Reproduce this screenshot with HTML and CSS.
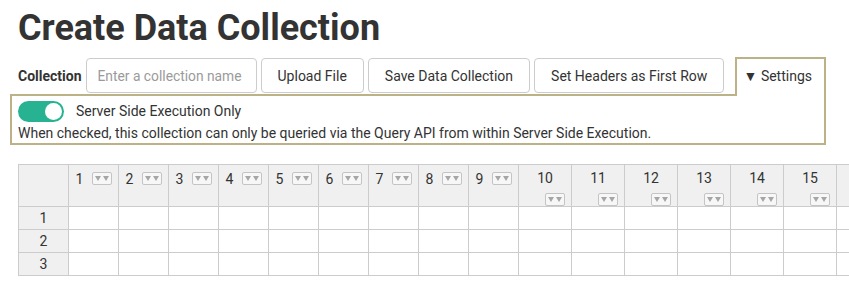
FILE: index.html
```html
<!DOCTYPE html>
<html lang="en">
<head>
    <meta charset="UTF-8">
    <title>Create Data Collection</title>
    <link rel="stylesheet" href="styles.css">
</head>
<body>
    <div class="page">
        <h1 class="title">Create Data Collection</h1>
        <div class="toolbar">
            <label class="field-label">Collection</label>
            <input class="name-input" type="text" placeholder="Enter a collection name">
            <button class="btn">Upload File</button>
            <button class="btn">Save Data Collection</button>
            <button class="btn">Set Headers as First Row</button>
            <div class="settings-tab">&#9660; Settings</div>
        </div>
        <div class="settings-panel">
            <div class="switch-row">
                <span class="switch on"><span class="knob"></span></span>
                <span>Server Side Execution Only</span>
            </div>
            <div class="hint">When checked, this collection can only be queried via the Query API from within Server Side Execution.</div>
        </div>
        <div class="grid-wrap">
            <table class="grid">
                <colgroup>
                    <col class="c-narrow"><col class="c-narrow"><col class="c-narrow"><col class="c-narrow"><col class="c-narrow">
                    <col class="c-narrow"><col class="c-narrow"><col class="c-narrow"><col class="c-narrow"><col class="c-narrow">
                    <col class="c-wide"><col class="c-wide"><col class="c-wide"><col class="c-wide"><col class="c-wide">
                    <col class="c-wide"><col class="c-wide">
                </colgroup>
                <thead>
                    <tr>
                        <th class="corner"></th>
                        <th><div class="head"><span class="num">1</span><span class="type-btn"><i></i><i></i></span></div></th>
                        <th><div class="head"><span class="num">2</span><span class="type-btn"><i></i><i></i></span></div></th>
                        <th><div class="head"><span class="num">3</span><span class="type-btn"><i></i><i></i></span></div></th>
                        <th><div class="head"><span class="num">4</span><span class="type-btn"><i></i><i></i></span></div></th>
                        <th><div class="head"><span class="num">5</span><span class="type-btn"><i></i><i></i></span></div></th>
                        <th><div class="head"><span class="num">6</span><span class="type-btn"><i></i><i></i></span></div></th>
                        <th><div class="head"><span class="num">7</span><span class="type-btn"><i></i><i></i></span></div></th>
                        <th><div class="head"><span class="num">8</span><span class="type-btn"><i></i><i></i></span></div></th>
                        <th><div class="head"><span class="num">9</span><span class="type-btn"><i></i><i></i></span></div></th>
                        <th><div class="head stack"><span class="num">10</span><span class="type-btn"><i></i><i></i></span></div></th>
                        <th><div class="head stack"><span class="num">11</span><span class="type-btn"><i></i><i></i></span></div></th>
                        <th><div class="head stack"><span class="num">12</span><span class="type-btn"><i></i><i></i></span></div></th>
                        <th><div class="head stack"><span class="num">13</span><span class="type-btn"><i></i><i></i></span></div></th>
                        <th><div class="head stack"><span class="num">14</span><span class="type-btn"><i></i><i></i></span></div></th>
                        <th><div class="head stack"><span class="num">15</span><span class="type-btn"><i></i><i></i></span></div></th>
                        <th></th>
                    </tr>
                </thead>
                <tbody>
                    <tr>
                        <th class="row-head">1</th>
                        <td></td><td></td><td></td><td></td><td></td><td></td><td></td><td></td>
                        <td></td><td></td><td></td><td></td><td></td><td></td><td></td><td></td>
                    </tr>
                    <tr>
                        <th class="row-head">2</th>
                        <td></td><td></td><td></td><td></td><td></td><td></td><td></td><td></td>
                        <td></td><td></td><td></td><td></td><td></td><td></td><td></td><td></td>
                    </tr>
                    <tr>
                        <th class="row-head">3</th>
                        <td></td><td></td><td></td><td></td><td></td><td></td><td></td><td></td>
                        <td></td><td></td><td></td><td></td><td></td><td></td><td></td><td></td>
                    </tr>
                </tbody>
            </table>
        </div>
    </div>
</body>
</html>
```

FILE: styles.css
```css
:root {
    --text: #333333;
    --muted: #999999;
    --border: #cccccc;
    --gold: #bcb287;
    --teal: #27b391;
    --head-bg: #f0f0f0;
}
body {
    margin: 0;
    font-family: Roboto, 'Liberation Sans', sans-serif;
    color: var(--text);
    background: #ffffff;
    overflow: hidden;
}
.page {
    padding: 0 0 0 18px;
}
.title {
    margin: 6px 0 0;
    font-size: 36px;
    line-height: 44px;
    font-weight: 700;
    color: #333333;
}
.toolbar {
    display: flex;
    align-items: center;
    gap: 4px;
    margin-top: 7px;
}
.field-label {
    font-size: 14px;
    font-weight: 700;
}
.name-input {
    width: 171px;
    height: 35px;
    box-sizing: border-box;
    border: 1px solid var(--border);
    border-radius: 4px;
    padding: 0 11px;
    font-family: inherit;
    font-size: 13.8px;
    color: var(--text);
}
.name-input::placeholder {
    color: #9a9a9a;
}
.btn {
    height: 35px;
    box-sizing: border-box;
    padding: 0 16px;
    border: 1px solid var(--border);
    border-radius: 4px;
    background: #ffffff;
    font-family: inherit;
    font-size: 14px;
    color: var(--text);
}
.settings-tab {
    position: relative;
    z-index: 1;
    height: 39px;
    box-sizing: border-box;
    margin-left: auto;
    margin-right: 23px;
    margin-bottom: -2px;
    padding: 9px 12px 0 7px;
    border: 2px solid var(--gold);
    border-bottom: none;
    background: #ffffff;
    font-size: 14px;
}
.settings-panel {
    margin-left: -8px;
    width: 816px;
    box-sizing: border-box;
    border: 2px solid var(--gold);
    padding: 2px 6px 1px;
    font-size: 14px;
}
.switch-row {
    display: flex;
    align-items: center;
    gap: 12px;
    height: 26px;
}
.switch {
    display: inline-flex;
    align-items: center;
    justify-content: flex-end;
    width: 46px;
    height: 21px;
    box-sizing: border-box;
    padding: 0 2px;
    border-radius: 11px;
    background: #cccccc;
}
.switch.on {
    background: var(--teal);
}
.knob {
    width: 17px;
    height: 17px;
    border-radius: 50%;
    background: #ffffff;
}
.hint {
    line-height: 18px;
}
.grid-wrap {
    margin-top: 19px;
    overflow: hidden;
}
.grid {
    table-layout: fixed;
    border-collapse: collapse;
    width: 871px;
    font-size: 14px;
}
.c-narrow { width: 50px; }
.c-wide { width: 53px; }
.grid th, .grid td {
    border: 1px solid var(--border);
    padding: 0;
}
.grid thead th {
    height: 42px;
    box-sizing: border-box;
    vertical-align: top;
    background: var(--head-bg);
    font-weight: 400;
    padding: 4px 6px 0;
}
.grid tbody td, .grid tbody th {
    height: 22px;
}
.row-head {
    background: var(--head-bg);
    font-weight: 400;
    text-align: center;
}
.head {
    display: flex;
    align-items: center;
    height: 19px;
}
.head .num {
    flex: 1;
    text-align: center;
    line-height: 18px;
    padding-right: 8px;
}
.head.stack {
    flex-direction: column;
    align-items: stretch;
    height: auto;
}
.head.stack .num {
    padding-right: 0;
}
.head.stack .type-btn {
    align-self: flex-end;
    margin-top: 6px;
}
.type-btn {
    display: inline-flex;
    align-items: center;
    justify-content: center;
    gap: 2px;
    width: 20px;
    height: 13px;
    box-sizing: border-box;
    border: 1px solid #c4c4c4;
    border-radius: 2px;
    background: #f7f7f7;
}
.type-btn i {
    width: 0;
    height: 0;
    border-left: 3px solid transparent;
    border-right: 3px solid transparent;
    border-top: 5px solid #a6a6a6;
}
```
